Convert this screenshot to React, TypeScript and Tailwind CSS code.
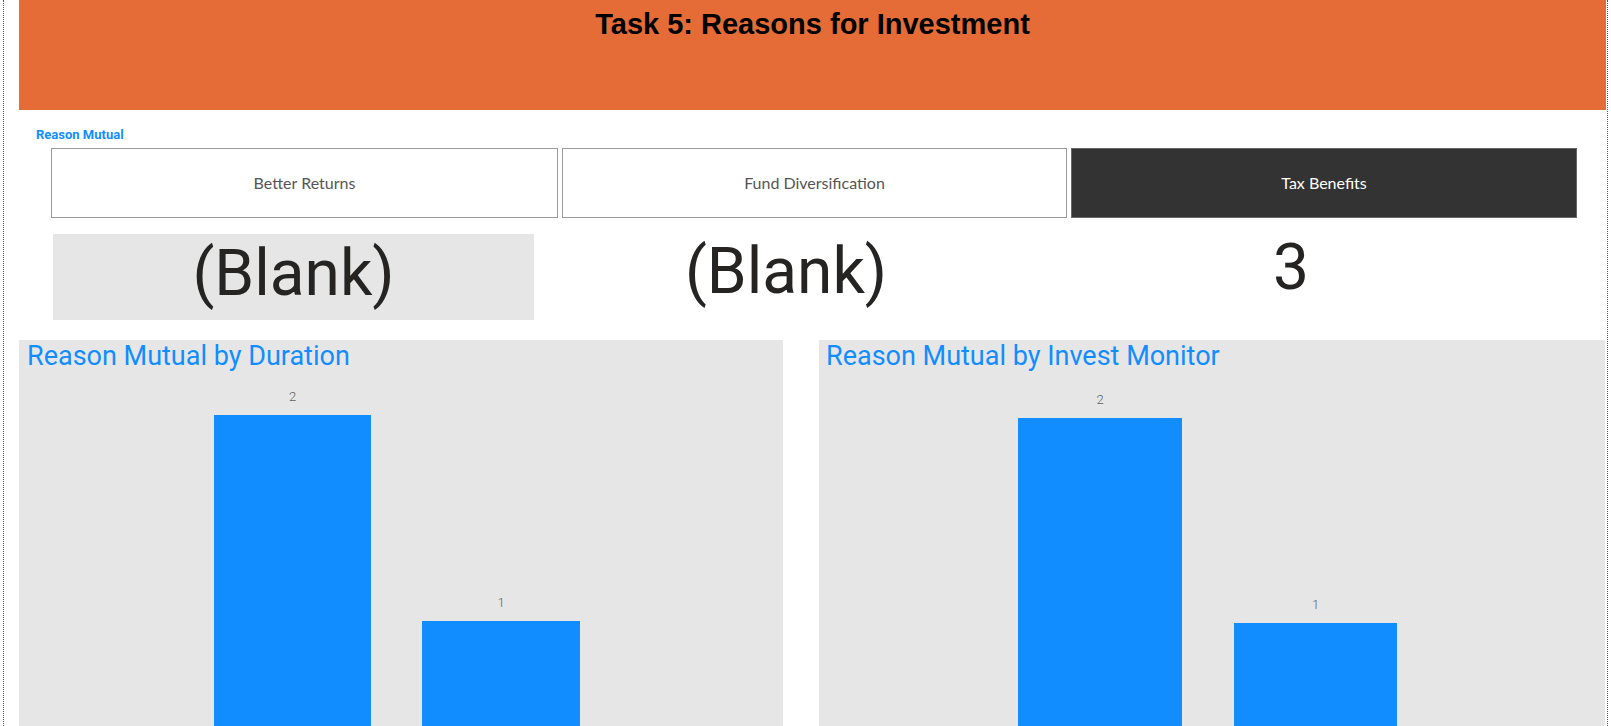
const BLUE = "bg-[#118DFF]"

type Bar = { value: number; height: number; width: number }

function BarChart({
  title,
  titlePad,
  plotPad,
  gap,
  bars,
  width,
}: {
  title: string
  titlePad: string
  plotPad: string
  gap: string
  bars: Bar[]
  width: string
}) {
  return (
    <div className={`${width} h-[520px] bg-[#E6E6E6] flex flex-col shrink-0`}>
      <h2
        className={`${titlePad} pt-[3px] shrink-0 text-[27px] leading-[26px] text-[#118DFF] font-['Roboto',sans-serif]`}
      >
        {title}
      </h2>
      <div className={`flex items-end shrink-0 h-[458px] ${plotPad} ${gap}`}>
        {bars.map((b, i) => (
          <div key={i} className="flex flex-col items-center">
            <span className="text-[13px] leading-[16px] mb-[10px] text-[#605E5C] font-['Roboto',sans-serif] font-light">
              {b.value}
            </span>
            <div className={`${BLUE} shrink-0`} style={{ height: b.height, width: b.width }} />
          </div>
        ))}
      </div>
    </div>
  )
}

export default function App() {
  const options = ["Better Returns", "Fund Diversification", "Tax Benefits"]

  return (
    <div className="w-[1611px] h-[726px] overflow-hidden bg-white flex pl-[3px] pr-[3px]">
      <div className="flex-1 flex flex-col border-x border-dotted border-[#555]">
        <header className="shrink-0 ml-[15px] mr-[1px] h-[110px] bg-[#E66C37] pt-[7px] text-center">
          <h1 className="text-[29px] leading-[34px] font-bold text-black font-['Liberation_Sans',Arial,sans-serif]">
            Task 5: Reasons for Investment
          </h1>
        </header>

        <div className="shrink-0 ml-[32px] mt-[18px] text-[13px] leading-[14px] font-bold text-[#118DFF] font-['Roboto',sans-serif]">
          Reason Mutual
        </div>

        <div className="shrink-0 ml-[47px] mt-[6px] grid grid-cols-[507px_505px_506px] gap-[4px] h-[70px]">
          {options.map((o) => {
            const active = o === "Tax Benefits"
            return (
              <div
                key={o}
                className={`flex items-center justify-center border text-[16px] font-['Lato',sans-serif] ${
                  active
                    ? "bg-[#333333] border-[#666] text-white"
                    : "bg-white border-[#9a9a9a] text-[#555]"
                }`}
              >
                {o}
              </div>
            )
          })}
        </div>

        <div className="shrink-0 ml-[49px] mt-[16px] flex h-[86px] font-['Roboto',sans-serif] text-[#252423]">
          <div className="w-[481px] bg-[#E6E6E6] flex items-center justify-center pb-[6px]">
            <span className="text-[64px] leading-[64px]">(Blank)</span>
          </div>
          <div className="w-[504px] flex items-center justify-center pb-[10px]">
            <span className="text-[64px] leading-[64px]">(Blank)</span>
          </div>
          <div className="w-[506px] flex justify-center pt-[2px]">
            <span className="text-[64px] leading-[64px]">3</span>
          </div>
        </div>

        <div className="shrink-0 ml-[15px] mt-[20px] flex gap-[36px]">
          <BarChart
            title="Reason Mutual by Duration"
            titlePad="pl-[8px]"
            plotPad="pl-[195px]"
            gap="gap-[51px]"
            width="w-[764px]"
            bars={[
              { value: 2, height: 412, width: 157 },
              { value: 1, height: 206, width: 158 },
            ]}
          />
          <BarChart
            title="Reason Mutual by Invest Monitor"
            titlePad="pl-[7px]"
            plotPad="pl-[199px]"
            gap="gap-[52px]"
            width="w-[786px]"
            bars={[
              { value: 2, height: 409, width: 164 },
              { value: 1, height: 204, width: 163 },
            ]}
          />
        </div>
      </div>
    </div>
  )
}
